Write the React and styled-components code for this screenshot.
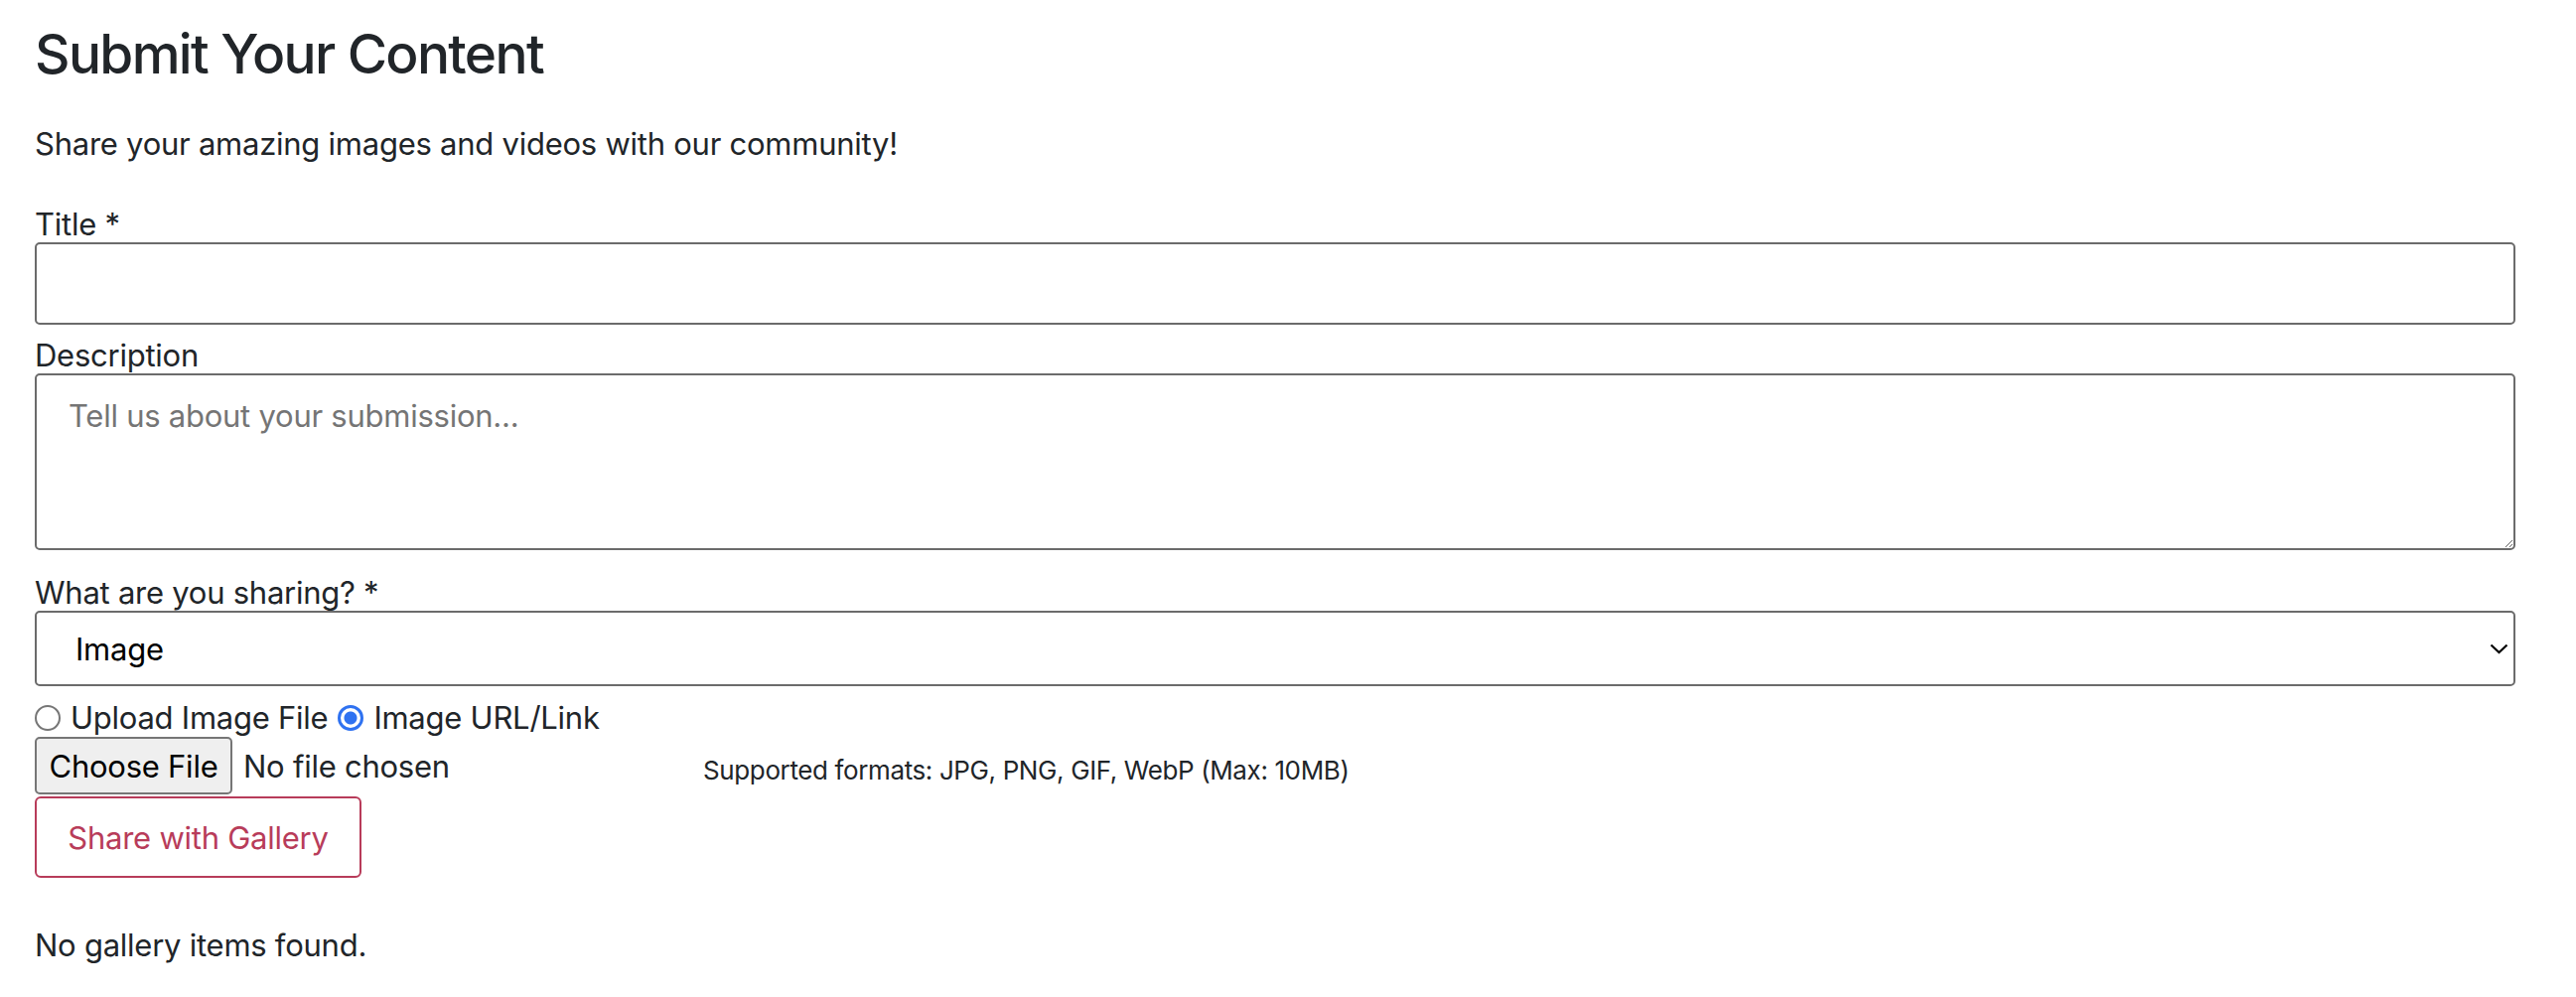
import React from 'react'
import styled, { createGlobalStyle } from 'styled-components'

const GlobalStyle = createGlobalStyle`
	* {
		box-sizing: border-box;
	}
	body {
		margin: 0;
		background: #fff;
		color: #212529;
		font-family: Inter, 'Noto Sans', 'Liberation Sans', sans-serif;
		font-size: 31px;
		letter-spacing: -0.25px;
	}
	input, textarea, select, button {
		letter-spacing: inherit;
	}
`

const Page = styled.main`
	width: 2594px;
	padding: 21px 61px 40px 35px;
	display: flex;
	flex-direction: column;
`

const Heading = styled.h1`
	margin: 0 0 33px;
	font-size: 55px;
	line-height: 67px;
	font-weight: 500;
	letter-spacing: -0.03em;
`

const Lead = styled.p`
	margin: 0 0 35px;
	line-height: 48px;
`

const Field = styled.div`
	display: flex;
	flex-direction: column;
	margin-bottom: ${(p) => p.$gap || 0}px;
`

const Label = styled.label`
	display: block;
	line-height: 38px;
	padding-top: 3px;
	margin-bottom: -1px;
`

const TextInput = styled.input`
	width: 100%;
	height: 83px;
	border: 2px solid #6b6b6b;
	border-radius: 5px;
	padding: 0 32px;
	font: inherit;
	outline: none;
`

const TextArea = styled.textarea`
	width: 100%;
	height: 178px;
	border: 2px solid #6b6b6b;
	border-radius: 5px;
	padding: 22px 32px 16px;
	font: inherit;
	line-height: 38px;
	color: #212529;
	outline: none;
	&::placeholder {
		color: #757575;
	}
`

const SelectWrap = styled.div`
	position: relative;
	width: 100%;
`

const Select = styled.select`
	appearance: none;
	width: 100%;
	height: 76px;
	border: 2px solid #6b6b6b;
	border-radius: 5px;
	padding: 0 60px 0 39px;
	background: #fff;
	color: #000;
	font: inherit;
	outline: none;
`

const Chevron = styled.svg`
	position: absolute;
	right: 7px;
	top: 33px;
	width: 19px;
	height: 11px;
	pointer-events: none;
`

const RadioRow = styled.div`
	display: flex;
	align-items: center;
	gap: 10px;
	margin: 13px 0 0;
	line-height: 38px;
`

const Radio = styled.input`
	appearance: none;
	margin: 0;
	width: 26px;
	height: 26px;
	border-radius: 50%;
	border: 2px solid #767676;
	background: #fff;
	&:checked {
		border: 3px solid #2f72f1;
		background: radial-gradient(circle, #2f72f1 0 6px, #fff 7px);
	}
`

const FileRow = styled.div`
	display: flex;
	align-items: center;
	margin-bottom: 2px;
`

const FileWidget = styled.div`
	width: 673px;
	display: flex;
	align-items: center;
	gap: 11px;
`

const ChooseButton = styled.button`
	height: 58px;
	width: 199px;
	padding: 0;
	border: 2px solid #767676;
	border-radius: 5px;
	background: #efefef;
	color: #000;
	font: inherit;
`

const Hint = styled.small`
	font-size: 26px;
	letter-spacing: -0.38px;
	padding-top: 8px;
	color: #212529;
`

const ShareButton = styled.button`
	align-self: flex-start;
	width: 329px;
	height: 82px;
	padding: 0;
	border: 2px solid #b83c5a;
	border-radius: 6px;
	background: #fff;
	color: #b83c5a;
	font: inherit;
`

const Empty = styled.p`
	margin: 49px 0 0;
	line-height: 38px;
`

export default function App() {
	return (
		<Page>
			<GlobalStyle />
			<Heading>Submit Your Content</Heading>
			<Lead>Share your amazing images and videos with our community!</Lead>

			<Field $gap={9}>
				<Label htmlFor='title'>Title *</Label>
				<TextInput id='title' type='text' />
			</Field>

			<Field $gap={21}>
				<Label htmlFor='desc'>Description</Label>
				<TextArea id='desc' placeholder='Tell us about your submission...' />
			</Field>

			<Field>
				<Label htmlFor='kind'>What are you sharing? *</Label>
				<SelectWrap>
					<Select id='kind' defaultValue='image'>
						<option value='image'>Image</option>
						<option value='video'>Video</option>
					</Select>
					<Chevron viewBox='0 0 19 11'>
						<polyline points='1.5,1.5 9.5,9 17.5,1.5' fill='none' stroke='#000' strokeWidth='2.2' />
					</Chevron>
				</SelectWrap>
			</Field>

			<RadioRow>
				<Radio type='radio' name='source' id='upload' />
				<label htmlFor='upload'>Upload Image File</label>
				<Radio type='radio' name='source' id='url' defaultChecked />
				<label htmlFor='url'>Image URL/Link</label>
			</RadioRow>

			<FileRow>
				<FileWidget>
					<ChooseButton type='button'>Choose File</ChooseButton>
					<span>No file chosen</span>
				</FileWidget>
				<Hint>Supported formats: JPG, PNG, GIF, WebP (Max: 10MB)</Hint>
			</FileRow>

			<ShareButton type='button'>Share with Gallery</ShareButton>

			<Empty>No gallery items found.</Empty>
		</Page>
	)
}
